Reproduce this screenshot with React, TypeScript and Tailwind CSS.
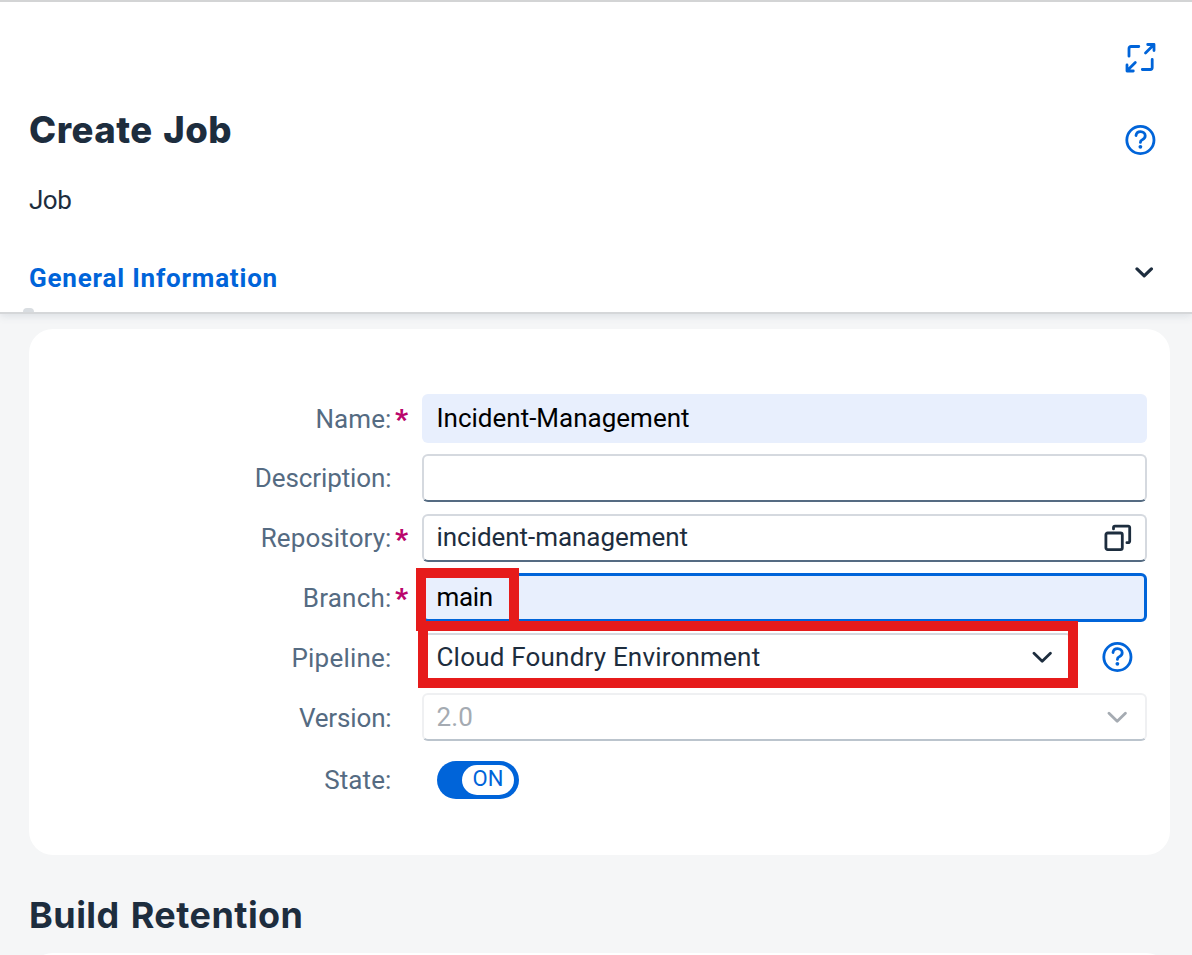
import type { ReactNode } from 'react';

function HelpIcon() {
  return (
    <svg width="32" height="32" viewBox="0 0 32 32" fill="none" stroke="#0064d9" strokeWidth="2.8" strokeLinecap="round" strokeLinejoin="round">
      <circle cx="16.400" cy="16" r="13.6" />
      <path d="M12 11.500C12.300 9 14.200 7.600 16.500 7.600c2.700 0 4.700 1.700 4.700 4.200 0 2.100-1.300 3.200-2.900 3.900-1.200.5-1.900.9-1.900 2.700" />
      <circle cx="16.400" cy="22.800" r="1.9" fill="#0064d9" stroke="none" />
    </svg>
  );
}

function ExpandIcon() {
  return (
    <svg width="32" height="32" viewBox="0 0 32 32" fill="none" stroke="#0064d9" strokeWidth="2.8" strokeLinecap="round" strokeLinejoin="round">
      <path d="M5 14.2V6.5a2 2 0 0 1 2-2h7.8M28.200 17.5v8a2 2 0 0 1-2 2H18.300" />
      <path d="M21.500 11l8-8M23.700 2.500h6.300v6M11.300 20.500l-8 8M3 23v6h6.300" />
    </svg>
  );
}

function Chevron({ color }: { color: string }) {
  return (
    <svg width="20" height="12" viewBox="0 0 20 12" fill="none" stroke={color} strokeWidth="2.8" strokeLinecap="round" strokeLinejoin="round">
      <path d="M2 2.200L10.200 10.200L18.400 2.200" />
    </svg>
  );
}

function HeaderChevron() {
  return (
    <svg width="20" height="12" viewBox="0 0 20 12" fill="none" stroke="#1d2d3e" strokeWidth="3.2" strokeLinecap="round" strokeLinejoin="round">
      <path d="M3 1.900L10.200 8.800L17.400 1.900" />
    </svg>
  );
}

function CopyIcon() {
  return (
    <svg width="28" height="28" viewBox="0 0 28 28" fill="none" stroke="#1d2d3e" strokeWidth="2.800" strokeLinecap="round" strokeLinejoin="round">
      <rect x="1.900" y="9" width="16.400" height="16.600" rx="1.800" />
      <path d="M9.500 4.900V3.600a1.500 1.500 0 0 1 1.500-1.500h13.200a1.500 1.500 0 0 1 1.500 1.500v13.600a1.500 1.500 0 0 1-1.500 1.500h-1.300" />
    </svg>
  );
}

function Row({ label, spacing, required, children }: { label: string; spacing: string; required?: boolean; children: ReactNode }) {
  return (
    <div className="flex h-[59.75px] items-center pl-[29px] pr-[23px] last:h-[67px]">
      <div className={`w-[333.500px] text-right text-[26px] leading-8 text-[#556b82] ${spacing}`}>{label}</div>
      <div className="flex h-8 w-[30.500px] justify-start pl-[3.500px] text-[28px] font-black leading-9 text-[#ba066c]">{required ? '*' : ''}</div>
      {children}
    </div>
  );
}

export default function App() {
  return (
    <div className="flex h-[955px] w-[1192px] flex-col overflow-hidden bg-[#f5f6f7] font-['Roboto',sans-serif] text-[#1d2d3e]">
      <header className="relative z-10 flex h-[314px] shrink-0 flex-col border-b-2 border-t-2 border-b-[#d5d7d9] border-t-[#d3d4d5] bg-white pl-[29px] shadow-[0_2px_8px_rgba(85,107,130,0.16)]">
        <div className="flex h-[80px] items-end justify-end pr-[36px] pb-[8px]">
          <ExpandIcon />
        </div>
        <div className="flex h-[92px] justify-between pr-[36px]">
          <h1 className="pt-[24px] font-['Inter'] text-[36.500px] font-extrabold leading-[48px] tracking-[0.500px] [word-spacing:2px]">Create Job</h1>
          <div className="pt-[42px]">
            <HelpIcon />
          </div>
        </div>
        <p className="h-[64px] pt-[8px] text-[26px] leading-9 tracking-[-0.5px]">Job</p>
        <div className="flex h-[72px] items-start justify-between pr-[38px] pt-[22px]">
          <h2 className="text-[26px] font-bold leading-9 tracking-[0.8px] text-[#0064d9]">General Information</h2>
          <div className="pt-[7px]">
            <HeaderChevron />
          </div>
        </div>
        <span className="absolute bottom-0 left-[23px] h-1 w-[11px] rounded-t-[4px] bg-[#d9dde1]" />
      </header>

      <main className="flex flex-col pl-[29px] pr-[22px] pt-[15px]">
        <section className="h-[526px] rounded-[24px] bg-white pt-[59.250px]">
          <Row label="Name:" spacing="tracking-[0.1px] pt-[2px]" required>
            <div className="flex h-[49px] flex-1 items-center rounded-md bg-[#e8effd] px-[14.500px] text-[26px] tracking-[0px] text-black">Incident-Management</div>
          </Row>
          <Row label="Description:" spacing="tracking-[-0.1px]">
            <div className="h-[48px] flex-1 rounded-md border-2 border-[#d5d9df] border-b-[#556b82]" />
          </Row>
          <Row label="Repository:" spacing="tracking-[0.1px] pt-[1.500px]" required>
            <div className="flex h-[48px] flex-1 items-center justify-between rounded-md border-2 border-[#d5d9df] border-b-[#556b82] pl-[12.500px] pr-[13px] text-[26px] tracking-[-0.050px]">
              <span className="-mt-[1px]">incident-management</span>
              <CopyIcon />
            </div>
          </Row>
          <Row label="Branch:" spacing="tracking-[0.2px] pt-[1.500px]" required>
            <div className="relative flex h-[49px] flex-1 items-center rounded-md border-[3px] border-[#0064d9] bg-[#e8effd] px-[11.500px] text-[26px] tracking-[-0.3px] text-black">
              <span className="mt-[1px]">main</span>
              <span className="absolute left-[-9px] top-[-8px] h-[63px] w-[103px] border-[10px] border-[#e61b1b]" />
            </div>
          </Row>
          <Row label="Pipeline:" spacing="tracking-[0.200px] pt-[1.500px]">
            <div className="relative flex h-[48px] w-[650px] items-center justify-between rounded-md border-2 border-[#d5d9df] border-b-[#556b82] pl-[12.500px] pr-[18px] text-[26px] tracking-[0.2px]">
              Cloud Foundry Environment
              <Chevron color="#1d2d3e" />
              <span className="absolute left-[-6px] top-[-14px] h-[67px] w-[660px] border-[10px] border-[#e61b1b]" />
            </div>
            <div className="ml-auto pr-[14px]">
              <HelpIcon />
            </div>
          </Row>
          <Row label="Version:" spacing="tracking-[-0.150px] pt-[1.500px]">
            <div className="mt-[1px] flex h-[48px] flex-1 items-center justify-between rounded-md border-2 border-[#eff0f2] border-b-[#bbc4cd] pl-[12.500px] pr-[18px] text-[26px] tracking-[0.2px] text-[#a5abb2]">
              2.0
              <Chevron color="#a5abb2" />
            </div>
          </Row>
          <Row label="State:" spacing="tracking-[0.1px]">
            <div className="ml-[15px] flex h-[38px] w-[82px] items-center justify-end rounded-full bg-[#0064d9] pr-[5px]">
              <div className="flex h-[30px] w-[52px] items-center justify-center rounded-full bg-white pb-[3px] text-[22px] text-[#0064d9]">ON</div>
            </div>
          </Row>
        </section>
        <h2 className="h-[98px] pt-[36px] font-['Inter'] text-[36px] font-bold leading-[48px] tracking-[0.450px] [word-spacing:2px]">Build Retention</h2>
        <section className="h-16 rounded-[24px] bg-white" />
      </main>
    </div>
  );
}
